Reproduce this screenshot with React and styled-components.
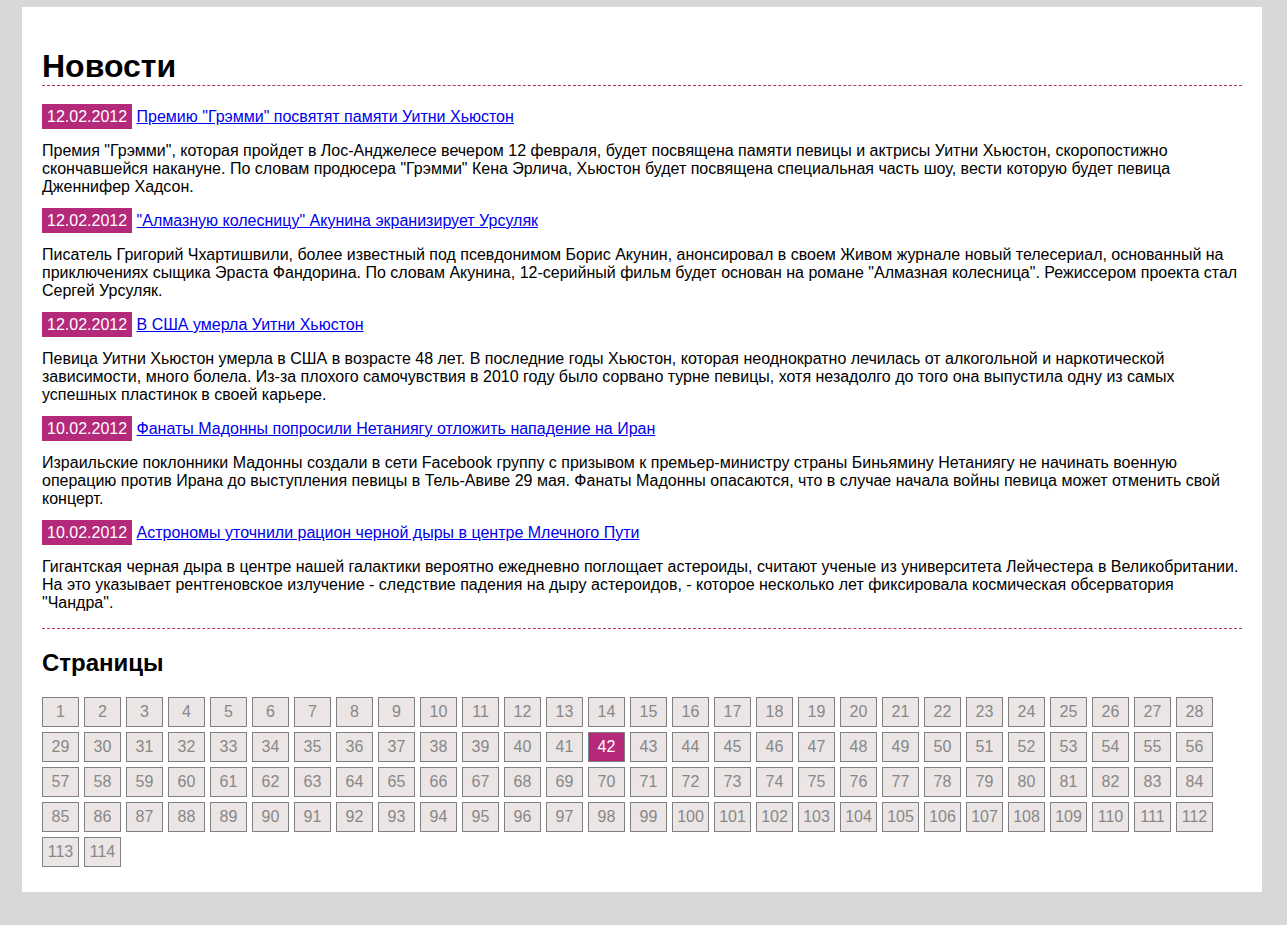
import React from "react";
import styled, { createGlobalStyle } from "styled-components";

const GlobalStyle = createGlobalStyle`
  html, body {
    margin: 0;
    padding: 0;
    background: #d8d8d8;
  }
  body {
    font-family: "Liberation Sans", Arial, sans-serif;
    font-size: 16px;
    color: #000;
  }
`;

const Page = styled.div`
  width: 1240px;
  margin: 7px 0 33px 22px;
  padding: 20px;
  box-sizing: border-box;
  background: #fff;
`;

const Title = styled.h1`
  font-size: 32px;
  font-weight: bold;
  margin: 21.44px 0;
  border-bottom: 1px dashed #b03075;
`;

const NewsHead = styled.p`
  margin: 16px 0;
`;

const DateBadge = styled.span`
  background: #b5297a;
  color: #fff;
  padding: 4px 5px;
`;

const NewsLink = styled.a`
  color: #0000ee;
  text-decoration: underline;
`;

const NewsText = styled.p`
  margin: 16px 0;
`;

const Divider = styled.div`
  border-bottom: 1px dashed #b83078;
`;

const SubTitle = styled.h2`
  font-size: 24px;
  font-weight: bold;
  margin: 19.92px 0;
`;

const Pager = styled.div`
  display: flex;
  flex-wrap: wrap;
  gap: 5px;
  margin-bottom: 5px;
`;

const PageBox = styled.a`
  box-sizing: border-box;
  width: 37px;
  height: 30px;
  display: flex;
  align-items: center;
  justify-content: center;
  border: 1px solid #808080;
  background: ${(p) => (p.$active ? "#b5297a" : "#ebe5e5")};
  color: ${(p) => (p.$active ? "#fff" : "#888")};
  font-size: 16px;
  text-decoration: none;
  cursor: pointer;
`;

const news = [
  {
    date: "12.02.2012",
    title: 'Премию "Грэмми" посвятят памяти Уитни Хьюстон',
    text: 'Премия "Грэмми", которая пройдет в Лос-Анджелесе вечером 12 февраля, будет посвящена памяти певицы и актрисы Уитни Хьюстон, скоропостижно скончавшейся накануне. По словам продюсера "Грэмми" Кена Эрлича, Хьюстон будет посвящена специальная часть шоу, вести которую будет певица Дженнифер Хадсон.',
  },
  {
    date: "12.02.2012",
    title: '"Алмазную колесницу" Акунина экранизирует Урсуляк',
    text: 'Писатель Григорий Чхартишвили, более известный под псевдонимом Борис Акунин, анонсировал в своем Живом журнале новый телесериал, основанный на приключениях сыщика Эраста Фандорина. По словам Акунина, 12-серийный фильм будет основан на романе "Алмазная колесница". Режиссером проекта стал Сергей Урсуляк.',
  },
  {
    date: "12.02.2012",
    title: "В США умерла Уитни Хьюстон",
    text: "Певица Уитни Хьюстон умерла в США в возрасте 48 лет. В последние годы Хьюстон, которая неоднократно лечилась от алкогольной и наркотической зависимости, много болела. Из-за плохого самочувствия в 2010 году было сорвано турне певицы, хотя незадолго до того она выпустила одну из самых успешных пластинок в своей карьере.",
  },
  {
    date: "10.02.2012",
    title: "Фанаты Мадонны попросили Нетаниягу отложить нападение на Иран",
    text: "Израильские поклонники Мадонны создали в сети Facebook группу с призывом к премьер-министру страны Биньямину Нетаниягу не начинать военную операцию против Ирана до выступления певицы в Тель-Авиве 29 мая. Фанаты Мадонны опасаются, что в случае начала войны певица может отменить свой концерт.",
  },
  {
    date: "10.02.2012",
    title: "Астрономы уточнили рацион черной дыры в центре Млечного Пути",
    text: 'Гигантская черная дыра в центре нашей галактики вероятно ежедневно поглощает астероиды, считают ученые из университета Лейчестера в Великобритании. На это указывает рентгеновское излучение - следствие падения на дыру астероидов, - которое несколько лет фиксировала космическая обсерватория "Чандра".',
  },
];

const pages = Array.from({ length: 114 }, (_, i) => i + 1);

export default function App() {
  return (
    <>
      <GlobalStyle />
      <Page>
        <Title>Новости</Title>
        {news.map((n, i) => (
          <React.Fragment key={i}>
            <NewsHead>
              <DateBadge>{n.date}</DateBadge> <NewsLink href="#">{n.title}</NewsLink>
            </NewsHead>
            <NewsText>{n.text}</NewsText>
          </React.Fragment>
        ))}
        <Divider />
        <SubTitle>Страницы</SubTitle>
        <Pager>
          {pages.map((p) => (
            <PageBox key={p} $active={p === 42}>
              {p}
            </PageBox>
          ))}
        </Pager>
      </Page>
    </>
  );
}
